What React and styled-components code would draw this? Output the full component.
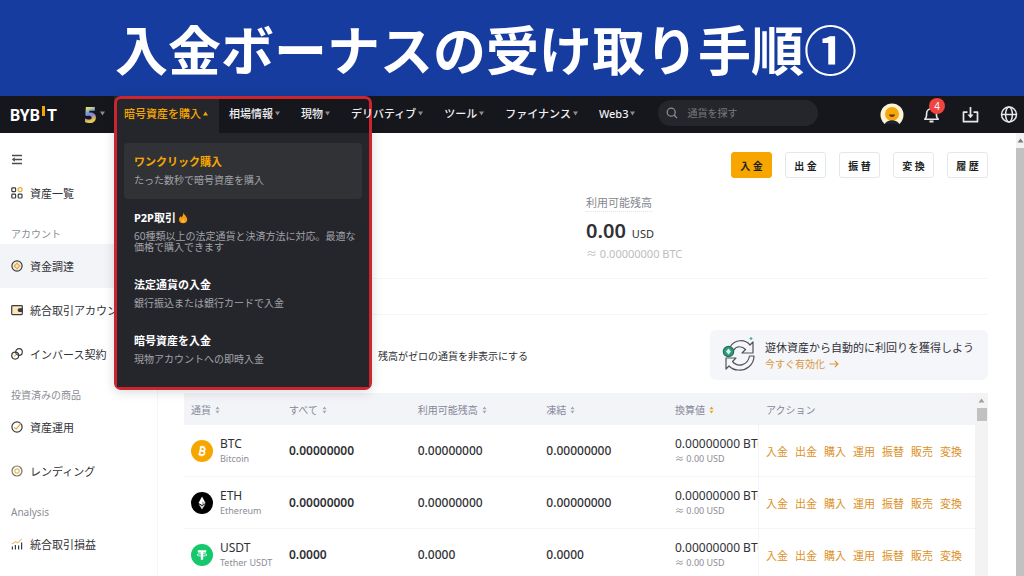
import React, {useState} from 'react';
import styled, {createGlobalStyle} from 'styled-components';

const MENUS = ['相場情報', '現物', 'デリバティブ', 'ツール', 'ファイナンス', 'Web3']

const BUY_MENU = [
    {title: 'ワンクリック購入', desc: 'たった数秒で暗号資産を購入'},
    {title: 'P2P取引', desc: '60種類以上の法定通貨と決済方法に対応。最適な価格で購入できます', hot: true},
    {title: '法定通貨の入金', desc: '銀行振込または銀行カードで入金'},
    {title: '暗号資産を入金', desc: '現物アカウントへの即時入金'},
]

const COINS = [
    {code: 'BTC', name: 'Bitcoin', amount: '0.00000000', color: '#f7a600'},
    {code: 'ETH', name: 'Ethereum', amount: '0.00000000', color: '#000000'},
    {code: 'USDT', name: 'Tether USDT', amount: '0.0000', color: '#16c76c'},
]

const ACTIONS = ['入金', '出金', '購入', '運用', '振替', '販売', '変換']

function Caret({up}) {
    return (
        <CaretSvg viewBox="0 0 7 5" aria-hidden="true">
            <path d={up ? 'M3.5 0.5L6 4.5H1z' : 'M1 0.5H6L3.5 4.5z'} fill={up ? '#f7a600' : '#8a8b90'}/>
        </CaretSvg>
    )
}

function Sort({active}) {
    return (
        <SortSvg viewBox="0 0 5 8" aria-hidden="true">
            <path d="M2.5 0.5L4.5 3.2H0.5z" fill={active ? '#c9a35a' : '#a3a7b3'}/>
            <path d="M2.5 7.5L4.5 4.8H0.5z" fill={active ? '#f7a600' : '#a3a7b3'}/>
        </SortSvg>
    )
}

function CoinIcon({code, color}) {
    return (
        <CoinSvg viewBox="0 0 22 22" aria-hidden="true">
            <circle cx="11" cy="11" r="11" fill={color}/>
            {code === 'BTC' && (
                <g transform="rotate(12 11 11)" fill="none" stroke="#fff" strokeWidth="1.7">
                    <path d="M8 7.3h3.6a1.8 1.8 0 0 1 0 3.6H9.2M9.2 10.9h2.8a1.9 1.9 0 0 1 0 3.8H8M9.2 7.3v7.4"/>
                    <path d="M10 5.6v1.6M12 5.6v1.6M10 14.8v1.6M12 14.8v1.6" strokeWidth="1"/>
                </g>
            )}
            {code === 'ETH' && (
                <>
                    <path d="M11 4.6L7.5 11l3.5 2 3.5-2z" fill="#fff"/>
                    <path d="M11 17.4L7.5 12.1l3.5 2 3.5-2z" fill="#d5d5d5"/>
                    <path d="M11 9.2v3.8l3.5-2z" fill="#b9b9b9"/>
                </>
            )}
            {code === 'USDT' && (
                <>
                    <path d="M6.8 6.2h8.4v2.3h-3v7.3H9.8V8.5H6.8z" fill="#fff"/>
                    <ellipse cx="11" cy="10.8" rx="5" ry="1.2" fill="none" stroke="#fff" strokeWidth="0.8"/>
                </>
            )}
        </CoinSvg>
    )
}

function SideIcon({kind}) {
    return (
        <SideSvg viewBox="0 0 12 12" fill="none" stroke="#3b3c42" strokeWidth="1.2" aria-hidden="true">
            {kind === 'grid' && (
                <>
                    <rect x="0.8" y="0.8" width="3.8" height="3.8" rx="0.8"/>
                    <rect x="0.8" y="7.2" width="3.8" height="3.8" rx="0.8"/>
                    <rect x="7.2" y="7.2" width="3.8" height="3.8" rx="0.8"/>
                    <circle cx="9.1" cy="2.7" r="2" stroke="#e5a93a"/>
                </>
            )}
            {kind === 'coin' && (
                <>
                    <circle cx="6" cy="6" r="5.1"/>
                    <path d="M6 3.2L8.8 6 6 8.8 3.2 6z" stroke="#e5a93a" fill="#fbe7bf"/>
                </>
            )}
            {kind === 'wallet' && (
                <>
                    <rect x="0.7" y="1.6" width="10.6" height="9" rx="0.8" fill="#fbe7bf"/>
                    <path d="M11 4.8H8.5a1.2 1.2 0 0 0 0 2.6H11z" fill="#3b3c42"/>
                </>
            )}
            {kind === 'link' && (
                <>
                    <circle cx="4.2" cy="7.6" r="3.5"/>
                    <circle cx="8" cy="4" r="3.3"/>
                    <path d="M3.2 8.4L5.2 6.6" stroke="#e5a93a"/>
                </>
            )}
            {kind === 'earn' && (
                <>
                    <circle cx="6" cy="6" r="5.1"/>
                    <path d="M3.2 6.6L5.2 8 9.8 2.6" stroke="#e5a93a"/>
                </>
            )}
            {kind === 'lend' && (
                <>
                    <circle cx="6" cy="6" r="5" stroke="#77735f"/>
                    <circle cx="6" cy="6" r="2.2" stroke="#e5b95a"/>
                </>
            )}
            {kind === 'chart' && (
                <>
                    <path d="M1.4 11.5V8.5M4.4 11.5V7M7.6 11.5V7.5M10.6 11.5V4.5"/>
                    <path d="M1 6L4.4 3.6 6.8 4.8 10.8 1" stroke="#e5a93a" strokeWidth="1"/>
                </>
            )}
        </SideSvg>
    )
}

function SideLink({icon, children, active}) {
    return (
        <SideItem href="#" $active={active}>
            <SideIcon kind={icon}/>
            {children}
        </SideItem>
    )
}

function Header() {
    return (
        <HeaderBar>
            <Logo href="#" aria-label="BYBIT">BYB<LogoBar/>T</Logo>
            <Anniversary type="button"><Five>5</Five><Caret/></Anniversary>
            <Nav>
                <NavSlot>
                    <NavButton type="button" $active>暗号資産を購入<Caret up/></NavButton>
                    <Frame>
                        <Panel>
                            {BUY_MENU.map((item, i) => (
                                <MenuItem href="#" key={item.title} $active={i === 0}>
                                    <MenuTitle $active={i === 0}>
                                        {item.title}
                                        {item.hot && (
                                            <Flame viewBox="0 0 10 12" aria-hidden="true">
                                                <path d="M5.5 0.5C6 3 9.3 4.5 9.3 7.7A4.2 4.2 0 0 1 1 7.7C1 6 1.9 5 2.4 4.2L3.6 5.3C4.8 4 5.2 2.5 5.5 0.5z" fill="#f59a14"/>
                                                <path d="M5.2 6.5C6.5 8 6.9 8.8 6.5 9.7A1.7 1.7 0 0 1 3.5 9.3C3.6 8.3 4.8 7.8 5.2 6.5z" fill="#fbc02f"/>
                                            </Flame>
                                        )}
                                    </MenuTitle>
                                    <MenuDesc>{item.desc}</MenuDesc>
                                </MenuItem>
                            ))}
                        </Panel>
                    </Frame>
                </NavSlot>
                {MENUS.map((menu) => (
                    <NavSlot key={menu}>
                        <NavButton type="button">{menu}<Caret/></NavButton>
                    </NavSlot>
                ))}
            </Nav>
            <Search>
                <svg width="12" height="12" viewBox="0 0 12 12" fill="none" stroke="#8b8c91" strokeWidth="1.3" aria-hidden="true">
                    <circle cx="5.2" cy="5.2" r="4"/>
                    <path d="M8.2 8.2L11 11"/>
                </svg>
                <SearchInput type="search" aria-label="通貨を探す" placeholder="通貨を探す"/>
            </Search>
            <Tools>
                <ToolButton type="button" $size={24} aria-label="アカウント">
                    <svg width="24" height="24" viewBox="0 0 24 24">
                        <defs><clipPath id="face"><rect width="24" height="21"/></clipPath></defs>
                        <g clipPath="url(#face)">
                            <circle cx="12" cy="12" r="11.5" fill="#fff3d6"/>
                            <circle cx="12" cy="11" r="7" fill="#f5a70c"/>
                            <path d="M9 11.5h6c0 3.2-6 3.2-6 0z" fill="#5b3a10"/>
                            <path d="M4 24c0-9 16-9 16 0z" fill="#1b2130"/>
                        </g>
                    </svg>
                </ToolButton>
                <ToolButton type="button" $size={18} aria-label="通知">
                    <svg width="18" height="18" viewBox="0 0 18 18" fill="none" stroke="#e8e8ea" strokeWidth="1.6">
                        <path d="M0.8 13.2C2.8 11.8 2.6 10 2.6 7.5a4.9 4.9 0 0 1 9.8 0C12.4 10 12.2 11.8 14.2 13.2z" strokeLinejoin="round"/>
                        <path d="M5.5 15.500h4" strokeWidth="2"/>
                    </svg>
                    <Badge>4</Badge>
                </ToolButton>
                <ToolButton type="button" $size={18} aria-label="入金">
                    <svg width="18" height="18" viewBox="0 0 18 18" fill="none" stroke="#e8e8ea" strokeWidth="1.7">
                        <path d="M5.5 6.2H1.5v9.5h14V6.2h-4" strokeLinejoin="round"/>
                        <path d="M8.5 1v8"/>
                        <path d="M5.5 8.5h6l-3 3.8z" fill="#e8e8ea" stroke="none"/>
                    </svg>
                </ToolButton>
                <ToolButton type="button" $size={18} aria-label="言語">
                    <svg width="18" height="18" viewBox="0 0 18 18" fill="none" stroke="#e8e8ea" strokeWidth="1.5">
                        <circle cx="9" cy="8.5" r="7.5"/>
                        <ellipse cx="9" cy="8.5" rx="3.4" ry="7.5"/>
                        <path d="M1.5 8.5h15"/>
                    </svg>
                </ToolButton>
            </Tools>
        </HeaderBar>
    )
}

function Sidebar() {
    return (
        <Side>
            <Collapse type="button" aria-label="メニュー">
                <svg width="12" height="12" viewBox="0 0 12 12" fill="none" stroke="#4b4c52" strokeWidth="1.4">
                    <path d="M1 1.5h10M3.5 5.5H11M1 9.5h10"/>
                    <path d="M3.8 3.3v4.4L0.8 5.5z" fill="#4b4c52" stroke="none"/>
                </svg>
            </Collapse>
            <SideLink icon="grid">資産一覧</SideLink>
            <SideLabel>アカウント</SideLabel>
            <SideLink icon="coin" active>資金調達</SideLink>
            <SideLink icon="wallet">統合取引アカウント</SideLink>
            <SideLink icon="link">インバース契約</SideLink>
            <SideLabel>投資済みの商品</SideLabel>
            <SideLink icon="earn">資産運用</SideLink>
            <SideLink icon="lend">レンディング</SideLink>
            <SideLabel>Analysis</SideLabel>
            <SideLink icon="chart">統合取引損益</SideLink>
        </Side>
    )
}

function AssetTable() {
    return (
        <TableWrap>
            <TableArea>
                <Table>
                    <colgroup>
                        <Col $w={98}/><Col/><Col/><Col/><Col $w={90}/><Col $w={217}/>
                    </colgroup>
                    <thead>
                        <tr>
                            <Th>通貨<Sort/></Th>
                            <Th>すべて<Sort/></Th>
                            <Th>利用可能残高<Sort/></Th>
                            <Th>凍結<Sort/></Th>
                            <Th>換算値<Sort active/></Th>
                            <Th $line>アクション</Th>
                        </tr>
                    </thead>
                    <tbody>
                        {COINS.map((coin) => (
                            <tr key={coin.code}>
                                <Td>
                                    <Coin>
                                        <CoinIcon code={coin.code} color={coin.color}/>
                                        <div>
                                            <Main>{coin.code}</Main>
                                            <Sub>{coin.name}</Sub>
                                        </div>
                                    </Coin>
                                </Td>
                                <Td $bold>{coin.amount}</Td>
                                <Td>{coin.amount}</Td>
                                <Td>{coin.amount}</Td>
                                <Td>
                                    <Main>0.00000000 BTC</Main>
                                    <Sub>≈ 0.00 USD</Sub>
                                </Td>
                                <Td $line>
                                    <Actions>
                                        {ACTIONS.map((action) => <a href="#" key={action}>{action}</a>)}
                                    </Actions>
                                </Td>
                            </tr>
                        ))}
                    </tbody>
                </Table>
            </TableArea>
            <TableScroll>
                <svg width="7" height="5" viewBox="0 0 7 5"><path d="M3.5 0.5L6.5 4.5h-6z" fill="#a0a0a0"/></svg>
                <Thumb $h={13}/>
            </TableScroll>
        </TableWrap>
    )
}

export default function App() {
    const [hideZero, setHideZero] = useState(false)

    return (
        <Page>
            <GlobalStyle/>
            <Banner><BannerTitle>入金ボーナスの受け取り手順①</BannerTitle></Banner>
            <Header/>
            <Body>
                <Sidebar/>
                <Content>
                    <ButtonRow>
                        <ActionButton type="button" $primary>入 金</ActionButton>
                        <ActionButton type="button">出 金</ActionButton>
                        <ActionButton type="button">振 替</ActionButton>
                        <ActionButton type="button">変 換</ActionButton>
                        <ActionButton type="button">履 歴</ActionButton>
                    </ButtonRow>
                    <Balance>
                        <BalanceLabel>利用可能残高</BalanceLabel>
                        <BalanceValue>0.00<Unit>USD</Unit></BalanceValue>
                        <BalanceSub>≈ 0.00000000 BTC</BalanceSub>
                    </Balance>
                    <Strip/>
                    <FilterRow>
                        <HideZero>
                            <input type="checkbox" checked={hideZero} onChange={() => setHideZero(!hideZero)}/>
                            残高がゼロの通貨を非表示にする
                        </HideZero>
                        <Promo>
                            <svg width="36" height="36" viewBox="0 0 36 36" fill="none" stroke="#50535a" strokeWidth="1.2" strokeLinejoin="round" aria-hidden="true">
                                <path d="M8 10C13 2 23 2 28 8l3-3v11H20l3.5-3.5C20 8.5 14 9 12 13"/>
                                <path d="M32 19c0 9-8 15-16 14-4 0-7-2-9-4l-3 3V21h10l-3.5 3.5C16 31 26 28 27.5 19z"/>
                                <circle cx="6.5" cy="14.5" r="5.2" fill="#2f9b78" stroke="#2a6b58"/>
                                <path d="M6.5 11.5L9 14.5 6.5 17.5 4 14.5z" fill="#d9f2e8" stroke="none"/>
                                <path d="M29 0v3M27.500 1.500h3" stroke="#45b08c"/>
                            </svg>
                            <div>
                                <PromoTitle>遊休資産から自動的に利回りを獲得しよう</PromoTitle>
                                <PromoLink href="#">
                                    今すぐ有効化
                                    <svg width="10" height="8" viewBox="0 0 10 8" fill="none" stroke="currentColor" strokeWidth="1.2" aria-hidden="true">
                                        <path d="M0.5 4h8.5M5.8 0.8L9 4 5.8 7.2"/>
                                    </svg>
                                </PromoLink>
                            </div>
                        </Promo>
                    </FilterRow>
                    <AssetTable/>
                </Content>
                <PageScroll>
                    <svg width="7" height="5" viewBox="0 0 7 5"><path d="M3.5 0.5L6.5 4.5h-6z" fill="#7a7a7a"/></svg>
                    <Thumb/>
                </PageScroll>
            </Body>
        </Page>
    )
}

const GlobalStyle = createGlobalStyle`
  * {
    box-sizing: border-box;
  }
  body {
    margin: 0;
    font-family: "Noto Sans", "Noto Sans CJK JP", sans-serif;
    font-size: 11px;
    color: #303136;
    background: #ffffff;
  }
  button, input {
    font-family: inherit;
  }
  button {
    padding: 0;
    border: 0;
    background: none;
    cursor: pointer;
  }
  a {
    color: inherit;
    text-decoration: none;
  }
`
const Page = styled.div`
  display: flex;
  flex-direction: column;
  height: 100vh;
  overflow: hidden;
`
const Banner = styled.header`
  flex: none;
  padding: 10px 52px 10px 0;
  background: #163c9f;
  text-align: center;
`
const BannerTitle = styled.h1`
  margin: 0;
  color: #ffffff;
  font-family: "Noto Sans CJK JP", sans-serif;
  font-size: 53px;
  font-weight: 700;
  line-height: 76px;
  white-space: nowrap;
`
const HeaderBar = styled.div`
  position: relative;
  z-index: 2;
  flex: none;
  display: flex;
  align-items: center;
  height: 37px;
  padding: 0 6px 0 10px;
  background: #16171d;
`
const Logo = styled.a`
  display: flex;
  align-items: center;
  width: 74px;
  padding-top: 2px;
  color: #ffffff;
  font-family: Roboto, sans-serif;
  font-size: 16px;
  font-weight: 700;
`
const LogoBar = styled.span`
  width: 3px;
  height: 10px;
  margin: 0 2px 9px;
  background: #f7a600;
`
const Anniversary = styled.button`
  display: flex;
  align-items: center;
  gap: 2px;
  width: 30px;
  padding-bottom: 2px;
`
const Five = styled.span`
  font-family: "Noto Sans", sans-serif;
  font-size: 22px;
  font-weight: 900;
  line-height: 24px;
  color: transparent;
  background: linear-gradient(160deg, #e9dc6a 25%, #6fa0e0 42%, #8f7fd8 55%, #e9c84a 75%);
  background-clip: text;
`
const Nav = styled.nav`
  display: flex;
  height: 100%;
`
const NavSlot = styled.div`
  position: relative;
`
const NavButton = styled.button`
  display: flex;
  align-items: center;
  gap: 1px;
  height: 100%;
  padding: 0 10px 3px;
  color: ${({$active}) => $active ? '#f7a600' : '#f0f0f2'};
  background: ${({$active}) => $active ? '#25262c' : 'none'};
  font-size: 11px;
  font-weight: 500;
  white-space: nowrap;
`
const CaretSvg = styled.svg`
  width: 7px;
  height: 5px;
`
const Frame = styled.div`
  position: absolute;
  top: 0;
  left: 0;
  width: 258px;
  padding-top: 34px;
  border: 3px solid #cb2630;
  border-radius: 7px;
  box-shadow: 0 2px 12px rgba(0, 0, 0, 0.15);
`
const Panel = styled.div`
  padding: 10px 7px 9px;
  background: #25262c;
`
const MenuItem = styled.a`
  display: block;
  padding: 10px 4px 13px 10px;
  border-radius: 4px;
  background: ${({$active}) => $active ? '#313236' : 'none'};
`
const MenuTitle = styled.div`
  display: flex;
  align-items: center;
  gap: 2px;
  color: ${({$active}) => $active ? '#f7a600' : '#ffffff'};
  font-size: 11px;
  font-weight: 700;
  line-height: 17px;
`
const MenuDesc = styled.div`
  margin-top: 5px;
  color: #a2a3a8;
  font-size: 10px;
  line-height: 11px;
`
const Flame = styled.svg`
  width: 10px;
  height: 12px;
`
const Search = styled.label`
  display: flex;
  align-items: center;
  gap: 9px;
  flex: 0 1 160px;
  min-width: 0;
  height: 26px;
  margin: 0 0 3px 12px;
  padding: 0 8px;
  border-radius: 13px;
  background: #25262b;
`
const SearchInput = styled.input`
  flex: 1;
  min-width: 0;
  padding: 0;
  border: 0;
  outline: 0;
  color: #ffffff;
  background: none;
  font-size: 10px;
  &::placeholder {
    color: #77787d;
  }
`
const Tools = styled.div`
  display: flex;
  align-items: center;
  gap: 20px;
  margin-left: auto;
`
const ToolButton = styled.button`
  position: relative;
  display: flex;
  width: ${({$size}) => $size}px;
  height: ${({$size}) => $size}px;
`
const Badge = styled.span`
  position: absolute;
  top: -8px;
  left: 5px;
  width: 16px;
  border-radius: 8px;
  color: #ffffff;
  background: #ef4440;
  font-size: 10px;
  line-height: 16px;
  text-align: center;
`
const Body = styled.div`
  display: flex;
  flex: 1;
  min-height: 0;
`
const Side = styled.aside`
  flex: none;
  width: 158px;
  padding-top: 15px;
  border-right: 1px solid #f5f5f7;
`
const Collapse = styled.button`
  display: flex;
  align-items: center;
  height: 23px;
  padding-left: 11px;
`
const SideItem = styled.a`
  display: flex;
  align-items: center;
  gap: 7px;
  height: 44px;
  padding-left: 11px;
  background: ${({$active}) => $active ? '#f3f4f7' : 'none'};
  white-space: nowrap;
`
const SideSvg = styled.svg`
  width: 12px;
  height: 12px;
`
const SideLabel = styled.div`
  padding: 10px 0 0 11px;
  color: #8b8d94;
  font-size: 10px;
  line-height: 19px;
`
const Content = styled.main`
  flex: 1;
  min-width: 0;
  padding: 19px 28px 0 26px;
`
const ButtonRow = styled.div`
  display: flex;
  justify-content: flex-end;
  gap: 13px;
`
const ActionButton = styled.button`
  width: 41px;
  height: 26px;
  border: 1px solid ${({$primary}) => $primary ? '#f7a600' : '#e6e7ea'};
  border-radius: 3px;
  color: #1d1e22;
  background: ${({$primary}) => $primary ? '#f7a600' : '#ffffff'};
  font-size: 10px;
  font-weight: 700;
`
const Balance = styled.section`
  margin: 17px 0 16px 50%;
`
const BalanceLabel = styled.div`
  width: fit-content;
  color: #85878e;
  border-bottom: 1px dotted #e2e3e6;
  line-height: 16px;
`
const BalanceValue = styled.div`
  margin-top: 7px;
  font-size: 20px;
  font-weight: 600;
  line-height: 24px;
`
const Unit = styled.span`
  margin-left: 6px;
  font-size: 11px;
  font-weight: 400;
`
const BalanceSub = styled.div`
  color: #bcbdc2;
  line-height: 16px;
`
const Strip = styled.div`
  height: 37px;
  margin-bottom: 15px;
  border: solid #f5f5f7;
  border-width: 1px 0;
`
const FilterRow = styled.div`
  display: flex;
  align-items: center;
  justify-content: space-between;
  padding-left: 174px;
`
const HideZero = styled.label`
  display: flex;
  align-items: center;
  gap: 8px;
  font-size: 10px;
  input {
    width: 12px;
    height: 12px;
    margin: 0;
  }
`
const Promo = styled.section`
  display: flex;
  align-items: center;
  gap: 7px;
  height: 50px;
  padding: 0 14px 0 12px;
  border-radius: 6px;
  background: #f5f6fa;
`
const PromoTitle = styled.div`
  line-height: 17px;
`
const PromoLink = styled.a`
  display: flex;
  align-items: center;
  gap: 4px;
  color: #d8963c;
  font-size: 10px;
  line-height: 16px;
`
const TableWrap = styled.div`
  display: flex;
  margin-top: 13px;
`
const TableArea = styled.div`
  flex: 1;
  min-width: 0;
`
const Table = styled.table`
  width: 100%;
  table-layout: fixed;
  border-collapse: separate;
  border-spacing: 0;
`
const Col = styled.col`
  width: ${({$w}) => $w ? `${$w}px` : 'auto'};
`
const Th = styled.th`
  height: 32px;
  padding: 0 0 0 ${({$line}) => $line ? 8 : 7}px;
  color: #85889a;
  background: #f3f4f7;
  font-size: 10px;
  font-weight: 400;
  text-align: left;
  white-space: nowrap;
`
const SortSvg = styled.svg`
  width: 5px;
  height: 8px;
  margin-left: 4px;
`
const Td = styled.td`
  height: 52px;
  padding: 0 0 0 7px;
  overflow: hidden;
  border-bottom: 1px solid #f5f5f7;
  border-left: ${({$line}) => $line ? '1px solid #f5f5f7' : '0'};
  font-size: 12px;
  font-weight: ${({$bold}) => $bold ? 600 : 500};
  white-space: nowrap;
`
const Coin = styled.div`
  display: flex;
  align-items: center;
  gap: 7px;
`
const CoinSvg = styled.svg`
  flex: none;
  width: 22px;
  height: 22px;
`
const Main = styled.div`
  font-weight: 400;
  line-height: 16px;
`
const Sub = styled.div`
  color: #8b8d94;
  font-size: 9px;
  font-weight: 400;
  line-height: 14px;
`
const Actions = styled.div`
  display: flex;
  gap: 7px;
  color: #dc922a;
  font-size: 11px;
  font-weight: 400;
`
const TableScroll = styled.div`
  flex: none;
  display: flex;
  flex-direction: column;
  align-items: center;
  gap: 5px;
  width: 13px;
  padding-top: 5px;
  background: #f3f3f4;
`
const PageScroll = styled(TableScroll)`
  width: 8px;
`
const Thumb = styled.div`
  flex: ${({$h}) => $h ? `0 0 ${$h}px` : 1};
  width: 100%;
  max-width: 10px;
  background: #c1c1c1;
`
